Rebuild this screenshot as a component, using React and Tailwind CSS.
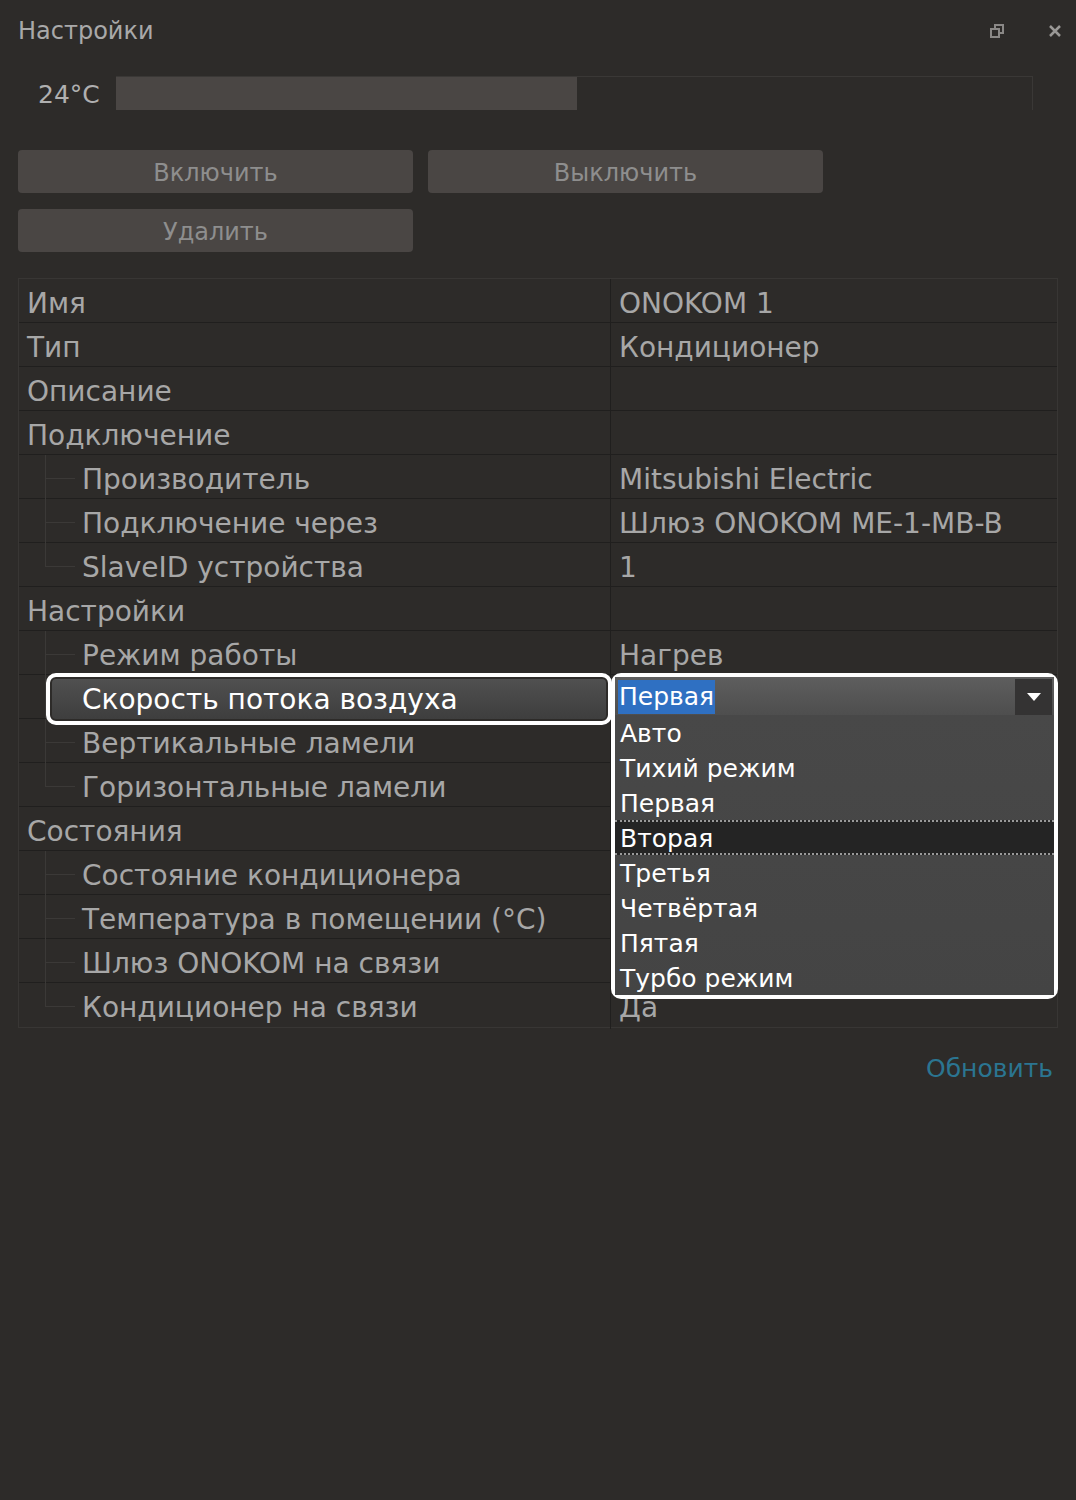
import React from 'react';

const rows = [
  { label: 'Имя', value: 'ONOKOM 1' },
  { label: 'Тип', value: 'Кондиционер' },
  { label: 'Описание', value: '' },
  { label: 'Подключение', value: '' },
  { label: 'Производитель', value: 'Mitsubishi Electric', child: true },
  { label: 'Подключение через', value: 'Шлюз ONOKOM ME-1-MB-B', child: true },
  { label: 'SlaveID устройства', value: '1', child: true, last: true },
  { label: 'Настройки', value: '' },
  { label: 'Режим работы', value: 'Нагрев', child: true },
  { label: 'Скорость потока воздуха', value: '', child: true, active: true },
  { label: 'Вертикальные ламели', value: '', child: true },
  { label: 'Горизонтальные ламели', value: '', child: true, last: true },
  { label: 'Состояния', value: '' },
  { label: 'Состояние кондиционера', value: '', child: true },
  { label: 'Температура в помещении (°C)', value: '', child: true },
  { label: 'Шлюз ONOKOM на связи', value: '', child: true },
  { label: 'Кондиционер на связи', value: 'Да', child: true, last: true },
];

const options = ['Авто', 'Тихий режим', 'Первая', 'Вторая', 'Третья', 'Четвёртая', 'Пятая', 'Турбо режим'];

const TreeLine = ({ last }) => (
  <div className="absolute left-[26px] top-0 h-full w-[32px]">
    <div className={`absolute left-0 top-0 w-px bg-[#3b3937] ${last ? 'h-1/2' : 'h-full'}`} />
    <div className="absolute left-0 top-1/2 h-px w-[30px] bg-[#3b3937]" />
  </div>
);

const Dropdown = () => (
  <div className="absolute left-[592px] top-[-2px] z-10 h-[326px] w-[447px] rounded-[10px] border-4 border-white bg-[#484848]">
    <div className="flex h-[38px] items-stretch bg-gradient-to-b from-[#5e5e5e] to-[#4e4e4e] pl-[3px] pr-[2px] pt-[2px]">
      <div className="flex flex-1 items-center">
        <span className="bg-[#2f70c2] px-[1px] text-[25px] leading-[34px] text-white">Первая</span>
      </div>
      <div className="flex w-[37px] items-center justify-center bg-[#343333]">
        <svg width="16" height="10" viewBox="0 0 16 10">
          <path d="M1 1h14L8 9z" fill="#fff" />
        </svg>
      </div>
    </div>
    <div className="flex flex-col bg-gradient-to-b from-[#484848] to-[#444444]">
      {options.map((o) => (
        <div
          key={o}
          className={`flex h-[35px] items-center pl-[5px] pt-[2px] text-[25px] text-white ${
            o === 'Вторая' ? 'border-y-2 border-dotted border-[#9a9a9a] bg-[#242424]' : ''
          }`}
        >
          {o}
        </div>
      ))}
    </div>
  </div>
);

const Row = ({ row }) => (
  <div className="relative grid h-[44px] grid-cols-[592px_1fr] border-b border-[#201f1e] last:border-b-0">
    <div className="relative flex items-center border-r border-[#201f1e]">
      {row.child && <TreeLine last={row.last} />}
      {row.active ? (
        <div className="absolute left-[27px] top-[-2px] z-10 flex h-[52px] w-[566px] items-center rounded-[10px] border-4 border-white bg-[#2d2b29] p-[2px]">
          <div className="flex h-full w-full items-center rounded-[4px] bg-gradient-to-b from-[#505050] to-[#3e3e3e] pl-[30px] pt-[2px] text-[28px] text-white">
            {row.label}
          </div>
        </div>
      ) : (
        <span className={`pt-[4px] text-[28px] ${row.child ? 'pl-[63px]' : 'pl-[8px]'}`}>{row.label}</span>
      )}
    </div>
    <div className="flex items-center pl-[8px] pt-[4px] text-[28px]">{row.value}</div>
    {row.active && <Dropdown />}
  </div>
);

export default function App() {
  return (
    <div className="min-h-[1500px] w-[1076px] bg-[#2d2b29] font-['DejaVu_Sans',sans-serif] text-[#a7a7a7]">
      {/* Title bar */}
      <div className="flex h-[62px] items-center justify-between pl-[18px] pr-[14px]">
        <span className="text-[24px] text-[#a9a9a9]">Настройки</span>
        <div className="flex items-center gap-[44px]">
          <svg width="14" height="14" viewBox="0 0 14 14" fill="none" stroke="#8a8886" strokeWidth="2">
            <rect x="5" y="1" width="8" height="8" />
            <rect x="1" y="5" width="8" height="8" fill="#2d2b29" />
          </svg>
          <svg width="14" height="14" viewBox="0 0 14 14" stroke="#9a9896" strokeWidth="2.5">
            <path d="M2 2l10 10M12 2L2 12" />
          </svg>
        </div>
      </div>

      {/* Temperature slider */}
      <div className="mt-[14px] flex h-[34px] items-center pl-[38px] pr-[43px]">
        <span className="w-[78px] pt-[4px] text-[25px] text-[#b0b0b0]">24°C</span>
        <div className="flex h-full flex-1 border-r border-t border-[#3a3836]">
          <div className="h-full w-[461px] bg-[#4a4644]" />
        </div>
      </div>

      {/* Buttons */}
      <div className="mt-[40px] grid grid-cols-[395px_395px] gap-x-[15px] gap-y-[16px] px-[18px]">
        {['Включить', 'Выключить', 'Удалить'].map((b) => (
          <button
            key={b}
            className="flex h-[43px] items-center justify-center rounded-[4px] bg-[#4a4644] pt-[2px] text-[24px] text-[#8e8e8e]"
          >
            {b}
          </button>
        ))}
      </div>

      {/* Property table */}
      <div className="mx-[18px] mt-[26px] border border-[#383634]">
        {rows.map((r) => (
          <Row key={r.label} row={r} />
        ))}
      </div>

      <div className="mt-[22px] flex justify-end pr-[23px]">
        <span className="text-[25px] text-[#2b7591]">Обновить</span>
      </div>
    </div>
  );
}
